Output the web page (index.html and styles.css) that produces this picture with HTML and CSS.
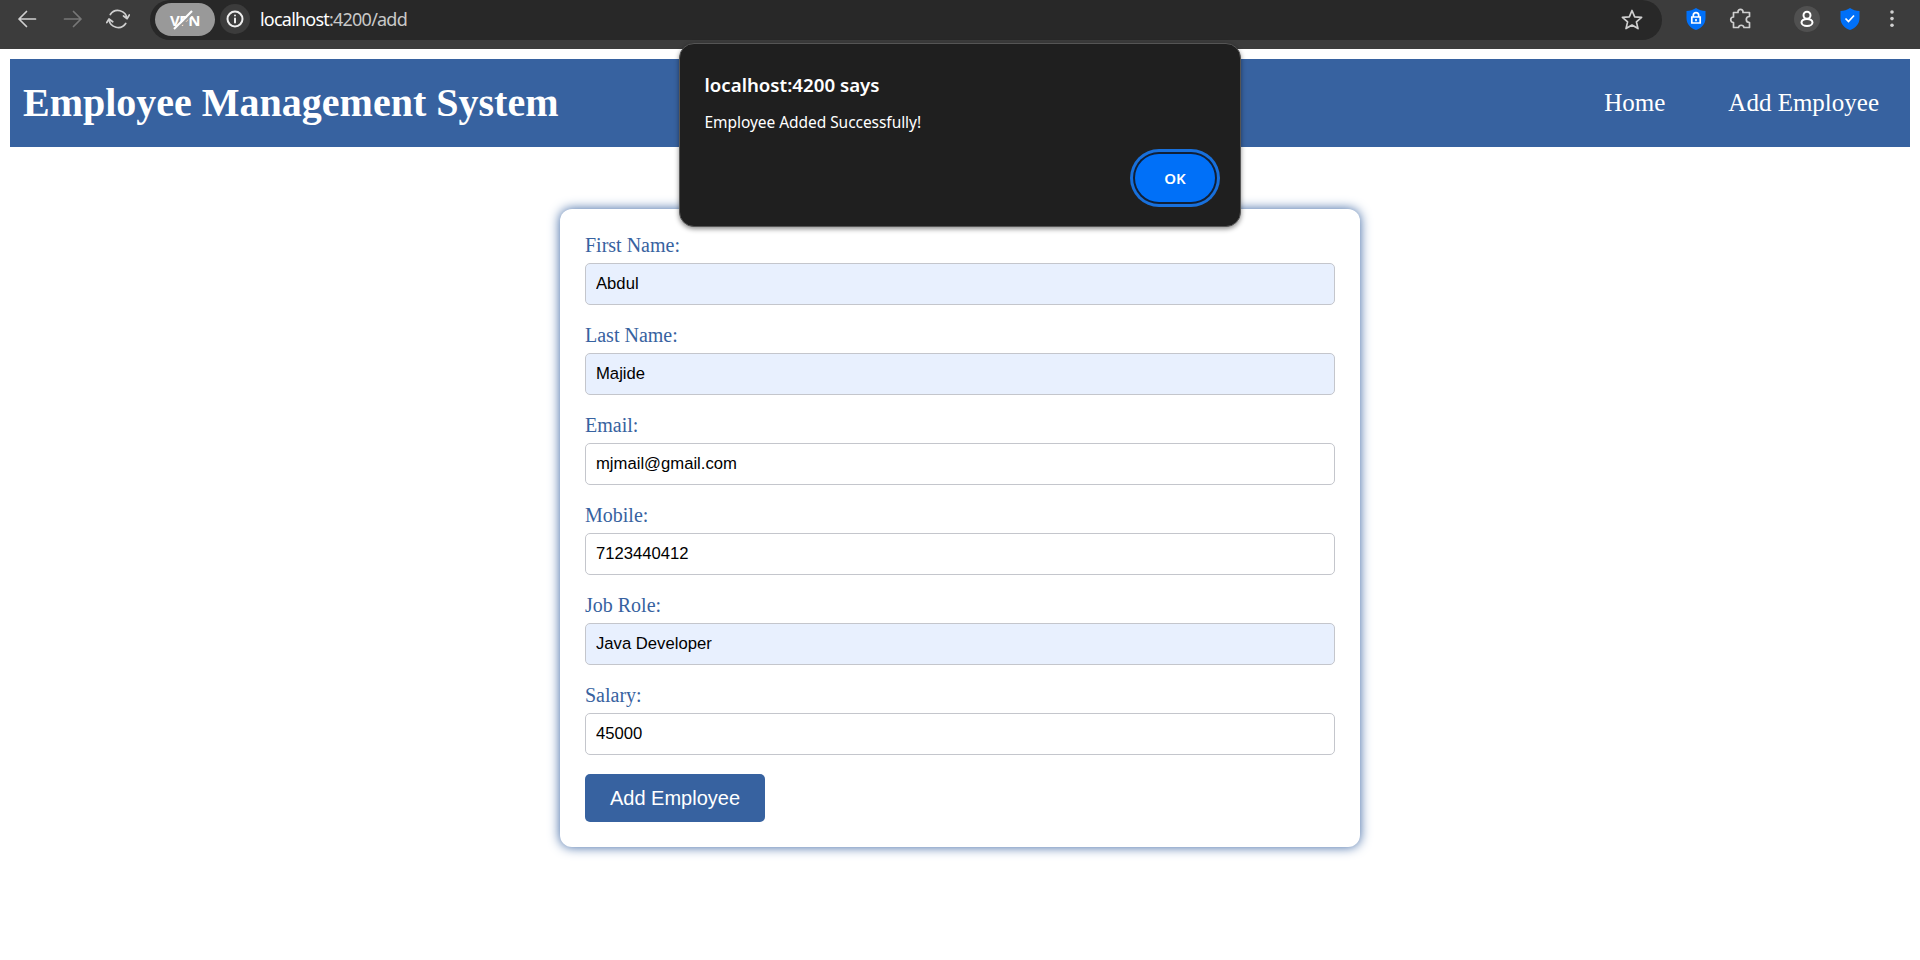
FILE: index.html
```
<!DOCTYPE html>
<html lang="en">
<head>
<meta charset="utf-8">
<title>Employee Management System</title>
<link rel="stylesheet" href="styles.css">
</head>
<body>
<div class="toolbar">
  <div class="nav-icons">
    <svg class="icon" width="24" height="24" viewBox="0 0 24 24"><path d="M20.500 12H4M11.500 4.500L4 12l7.500 7.500"/></svg>
    <svg class="icon dim" width="24" height="24" viewBox="0 0 24 24"><path d="M3.500 12H20M12.500 4.500L20 12l-7.500 7.500"/></svg>
    <svg class="icon" width="24" height="24" viewBox="0 0 24 24"><path d="M4.300 7.500A9.200 9.200 0 0 1 21 11.500M19.700 16.500A9.200 9.200 0 0 1 3 12.500M17.500 9l3.700 2.700L23.300 8M.8 15.500L3 12l3.700 2.800"/></svg>
  </div>
  <div class="address">
    <div class="vpn">VPN<svg class="slash" width="24" height="24" viewBox="0 0 24 24"><path class="gap" d="M5 22L22.500 4.500"/><path d="M3 21L21 3"/></svg></div>
    <div class="info"><svg class="icon bright" width="18" height="18" viewBox="0 0 18 18"><circle cx="9" cy="9" r="7.500"/><path d="M9 8.500v4M9 5.400v.1"/></svg></div>
    <div class="url"><span class="host">localhost</span>:4200/add</div>
    <svg class="icon star" width="24" height="24" viewBox="0 0 24 24"><path d="M12 2.500l2.700 6.300 6.900.6-5.200 4.500 1.600 6.700-6-3.600-6 3.600 1.600-6.700-5.200-4.500 6.900-.6z"/></svg>
  </div>
  <div class="extensions">
    <svg class="shield" width="20" height="22" viewBox="0 0 20 22"><path class="fill" d="M10 0C7 2 4 3 .5 3v7c0 6 4 10 9.500 12 5.500-2 9.500-6 9.500-12V3C16 3 13 2 10 0z"/><path class="line" d="M5.800 9h8.400v6H5.800zM7.300 9V7.300a2.700 2.700 0 0 1 5.400 0V9M10 11v2.200"/></svg>
    <svg class="icon puzzle" width="24" height="24" viewBox="0 0 24 24"><path d="M4.500 5.500H9C8.500 1.200 14.500 1.200 14 5.500H20.500V9.500C16.200 9.500 16.200 15.500 20.500 15.500V20.500H15C14.500 17.500 10 17.500 9.500 20.500H4.500V15.500C.8 15.500.8 10 4.500 10z"/></svg>
    <div class="profile"><svg class="icon person" width="16" height="18" viewBox="0 0 16 18"><circle cx="8" cy="5.300" r="3.500"/><ellipse cx="8" cy="12.400" rx="5.500" ry="3.500"/></svg></div>
    <svg class="shield" width="20" height="22" viewBox="0 0 20 22"><path class="fill" d="M10 0C7 2 4 3 .5 3v7c0 6 4 10 9.500 12 5.500-2 9.500-6 9.500-12V3C16 3 13 2 10 0z"/><path class="line" d="M5.500 10.500l3 3L14 7.500"/></svg>
    <svg class="dots" width="6" height="18" viewBox="0 0 6 18"><circle cx="3" cy="2" r="1.800"/><circle cx="3" cy="8.600" r="1.800"/><circle cx="3" cy="15.200" r="1.800"/></svg>
  </div>
</div>

<nav class="navbar">
  <h1 class="brand">Employee Management System</h1>
  <div class="links"><a class="link">Home</a><a class="link">Add Employee</a></div>
</nav>

<form class="card">
  <div class="field"><label class="label" for="first">First Name:</label><input class="input filled" id="first" value="Abdul"></div>
  <div class="field"><label class="label" for="last">Last Name:</label><input class="input filled" id="last" value="Majide"></div>
  <div class="field"><label class="label" for="email">Email:</label><input class="input" id="email" value="mjmail@gmail.com"></div>
  <div class="field"><label class="label" for="mobile">Mobile:</label><input class="input" id="mobile" value="7123440412"></div>
  <div class="field"><label class="label" for="role">Job Role:</label><input class="input filled" id="role" value="Java Developer"></div>
  <div class="field"><label class="label" for="salary">Salary:</label><input class="input" id="salary" value="45000"></div>
  <button class="submit" type="button">Add Employee</button>
</form>

<div class="dialog">
  <div class="dialog-title">localhost:4200 says</div>
  <div class="dialog-text">Employee Added Successfully!</div>
  <button class="ok" type="button">OK</button>
</div>
</body>
</html>
```
FILE: styles.css
```
* { box-sizing: border-box; }
body { margin: 0; height: 960px; overflow: hidden; background: #fff; font-family: "Liberation Serif", serif; position: relative; }

.toolbar { height: 49px; background: #3c3c3c; display: flex; align-items: flex-start; font-family: "Noto Sans", sans-serif; }
.nav-icons { display: flex; gap: 21.5px; padding: 7px 0 0 15px; width: 150px; flex: none; }
.icon { fill: none; stroke: #cfcfcf; stroke-width: 1.7; stroke-linecap: round; stroke-linejoin: round; display: block; flex: none; }
.dim { stroke: #777; }
.bright { stroke: #eee; stroke-width: 2; }
.address { width: 1512px; height: 40px; background: #282828; border-radius: 20px; display: flex; align-items: center; padding: 0 18px 2px 5px; flex: none; }
.vpn { width: 60px; height: 33px; border-radius: 17px; background: #999; color: #fff; font-size: 15px; font-weight: 700; letter-spacing: -0.4px; padding-top: 2px; display: flex; align-items: center; justify-content: center; position: relative; }
.slash { position: absolute; left: 16px; top: 5px; fill: none; stroke: #fff; stroke-width: 2.2; }
.slash .gap { stroke: #999; }
.info { width: 30px; height: 30px; border-radius: 50%; background: #3c3c3c; display: flex; align-items: center; justify-content: center; margin-left: 5px; }
.url { margin-left: 10px; font-size: 18px; line-height: 24px; letter-spacing: -0.78px; color: #c8c8c8; }
.host { color: #fff; }
.star { margin: 2px 0 0 auto; }
.extensions { display: flex; align-items: center; height: 38px; padding-left: 24px; }
.shield .fill { fill: #0070f8; }
.shield .line { fill: none; stroke: #fff; stroke-width: 1.7; }
.puzzle { margin-left: 23px; }
.profile { width: 26px; height: 26px; border-radius: 50%; background: #505050; display: flex; align-items: center; justify-content: center; margin-left: 41px; }
.person { stroke: #fff; stroke-width: 2; }
.profile + .shield { margin-left: 20px; }
.dots { margin-left: 29px; fill: #d0d0d0; }

.navbar { margin: 10px 10px 0; height: 88px; background: #3762a0; display: flex; align-items: center; justify-content: space-between; padding: 0 31px 0 13px; color: #fff; }
.brand { margin: 0; font-size: 40px; line-height: 46px; }
.links { display: flex; gap: 63px; font-size: 25px; }

.card { width: 800px; height: 638px; margin: 62px auto 0; padding: 25px; border-radius: 12px; background: #fff; box-shadow: 0 0 12px #3762a0; }
.field { height: 90px; }
.label { display: block; font-size: 20px; line-height: 22px; height: 29px; color: #3762a0; }
.input { display: block; width: 750px; height: 42px; padding: 0 10px; border: 1px solid #c4c6cc; border-radius: 5px; background: #fff; color: #000; font: 16.667px "Liberation Sans", sans-serif; outline: none; }
.filled { background: #e8f0fe; }
.submit { display: block; width: 180px; height: 48px; border: 0; border-radius: 5px; background: #3762a0; color: #fff; font: 20px "Liberation Sans", sans-serif; padding: 0; }

.dialog { position: absolute; left: 679px; top: 43px; width: 562px; height: 184px; border-radius: 15px; background: #1f1f1f; border: 1px solid #555; box-shadow: 0 2px 5px rgba(0, 0, 0, .45); padding: 26px 25px 0 24.5px; color: #fff; font-family: "Noto Sans", sans-serif; display: flex; flex-direction: column; }
.dialog-title { font-size: 18.700px; font-weight: 600; line-height: 30px; }
.dialog-text { font-size: 15.500px; line-height: 22px; letter-spacing: -0.05px; margin-top: 11px; }
.ok { width: 80px; height: 48px; border: 0; border-radius: 24px; background: #0070f8; color: #fff; font: 600 15px "Noto Sans", sans-serif; box-shadow: 0 0 0 2px #102038, 0 0 0 5px #1870dc; margin: 21px 0 0 auto; padding: 0; }
```
